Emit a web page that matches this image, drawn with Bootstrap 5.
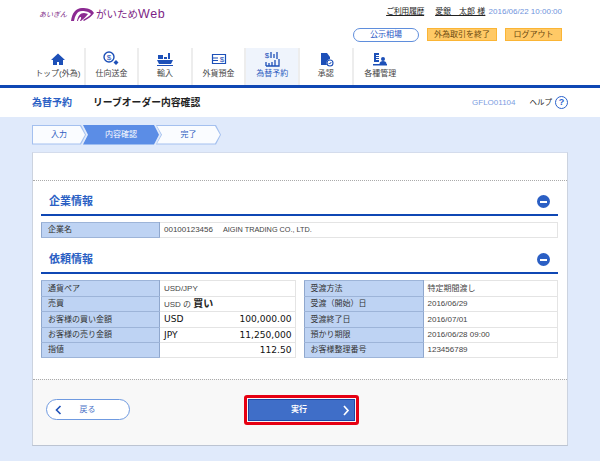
<!doctype html>
<html lang="ja"><head><meta charset="utf-8"><title>リーブオーダー内容確認</title>
<link rel="stylesheet" href="https://cdn.jsdelivr.net/npm/bootstrap@5.3.0/dist/css/bootstrap.min.css">
<style>
html,body{height:461px;overflow:hidden}
body{background:#e0eafb;font:8px/1.2 "Liberation Sans","Noto Sans CJK JP",sans-serif;color:#444}
.hdr{background:#fff;height:85px;padding:0 38px 0 39px}
.logo{height:28px;padding-top:7px;color:#7d1f86}
.logo-sm{font-size:7px;font-style:italic;margin-right:3px;margin-top:4px}
.logo-big{font-size:10.500px;margin-left:1px;line-height:17px;margin-top:-1px}
.logo-big em{font-style:normal;font-size:12.500px;letter-spacing:.6px}
.util{padding-top:7px;height:28px;font-size:8px;color:#333}
.util u{margin-right:11px;color:#222;letter-spacing:-.4px}
.util .who{margin-right:1px;text-decoration:underline;color:#222}
.date{color:#6f93dc}
.acts{height:14px}
.pub{width:66px;height:14px;border:1px solid #5f8edc;border-radius:7px;color:#1f55c4;margin-right:8px;line-height:12px}
.org{height:13px;background:#ffc966;border:1px solid #fbb535;color:#6b4a10;line-height:11px}
.org1{width:70px;margin-right:8px}.org2{width:57px}
.tabs{margin-top:6px;margin-left:-7px;height:37px}
.tabx{width:53.600px;height:37px;border-right:2px solid #ededed;color:#444;font-size:8px;padding-top:3px}
.tabx svg{display:block;height:16px;width:18px;margin-bottom:2px}
.tabx.on{background:#eff4fc;color:#2d5cc0}
.tabx.last{border:0}
.rule{height:3px;background:#0f47b4}
.ttl{height:29px;background:#fff;padding:0 32px}
.ttl-a{font-size:10px;font-weight:700;color:#2b5fc4;width:61px}
.ttl-b{font-size:9.800px;color:#222;font-weight:700}
.code{color:#7b9ddf;margin-right:14px}
.hlp{color:#222;font-size:7.500px;margin-right:3px}
.qm{width:13px;height:13px;border:1.500px solid #2a62cc;border-radius:50%;color:#2a62cc;font-size:9px;font-weight:700;line-height:10px}
.crumbs{padding:8px 0 0 32px;height:35px}
.stp{height:19.500px;position:relative;background:#a4c0ef;clip-path:polygon(0 0,calc(100% - 5px) 0,100% 50%,calc(100% - 5px) 100%,0 100%,5px 50%);color:#2d5cc0}
.stp::before{content:"";position:absolute;inset:1px;background:#fafcff;clip-path:polygon(0 0,calc(100% - 5px) 0,100% 50%,calc(100% - 5px) 100%,0 100%,5px 50%)}
.stp span{position:relative}
.stp.s1{width:54px;clip-path:polygon(0 0,calc(100% - 5px) 0,100% 50%,calc(100% - 5px) 100%,0 100%)}
.stp.s1::before{clip-path:polygon(0 0,calc(100% - 5px) 0,100% 50%,calc(100% - 5px) 100%,0 100%)}
.stp.s2{width:76px;margin-left:-3px;background:#5b8de6;color:#fff}
.stp.s2::before{background:#5b8de6}
.stp.s3{width:65px;margin-left:-3px}
.sheet{margin:0 32px;height:294px;background:#fff;border:1px solid #ccd3df;border-bottom:2px solid #bcc4d2;border-top:1px solid #d4dcec}
.blank{height:28px;border-bottom:1px dotted #aaa}
.inner{padding:0 9px 0 8px;height:198px}
.sec{height:35px;margin:0;padding:8px 8px 0 8px;border-bottom:2px solid #0f47b4;font-size:11px;font-weight:700;color:#2b5fc4}
.sec2{height:36px;padding-top:9px}
.tog{width:13px;height:13px;border-radius:50%;background:#2b5fc4;position:relative}
.tog::after{content:"";position:absolute;left:3px;right:3px;top:5.500px;height:2px;background:#fff}
.tb{border-collapse:collapse;width:100%;table-layout:fixed}
.tb th,.tb td{height:15.400px;padding:0 4px 0 4px;border:1px solid #e4e4e4;font-weight:400;white-space:nowrap;overflow:hidden}
.tb th{background:#bed3f3;color:#333;border-color:#9db4d8;border-left:1px solid #8fa7cd;border-right:1px solid #8fa7cd;padding-left:6px}
.tb td{color:#444;border-width:1.500px}
.tb td.big{font:500 9.100px "DejaVu Sans",sans-serif;color:#111;padding-right:3px}
.corp{font-size:7.300px;margin-left:10px}
.w1{width:118px}.w2{width:119px}
.gap1{margin-top:6px}
.gap2{margin-top:6px;gap:8px}
.amt{font-weight:700;font-size:10px;color:#222}
.foot{height:66px;background:#f8f8f8;border-top:1px dotted #aaa;padding:15px 13px 0 13px}
.btn.back{font-size:8px;line-height:1.2;width:84px;height:21px;border:1px solid #6f9ae0;border-radius:11px;background:#fff;color:#4c73c8;padding:0 0 0 8px;margin-top:4px}
.back svg{width:7px;height:10px}
.run-wrap{border:3px solid #e60012;border-radius:3px;width:115px;height:30px;margin-left:114px;padding:1px}
.btn.run{font-size:8px;line-height:1.2;width:100%;height:100%;background:#3f6ec8;border:1px solid #1c47a5;color:#fff;border-radius:0;padding:0 4px 0 0;font-weight:700}
.run span{padding-left:7px}
.run svg{width:8px;height:11px}
</style></head><body>
<header class="hdr">
  <div class="d-flex justify-content-between">
    <div class="logo d-flex align-items-start">
      <span class="logo-sm">あいぎん</span>
      <svg width="25" height="15" viewBox="0 0 25 15"><path d="M1 14C2 6 6 1 12 1c5 0 10 1 12 5-2 3-6 6-10 8l-1-1c3-2 7-4 8-6-3-3-7-3-9-3-5 0-7 5-8 10z" fill="#8c2a92"/><path d="M7 14c1-5 3-8 7-8 2 0 3 1 4 1-2 3-5 5-7 7h-1c1-2 2-4 0-4-1 1-2 3-2 4z" fill="#8c2a92"/></svg>
      <span class="logo-big">がいため<em>Web</em></span>
    </div>
    <div class="d-flex flex-column align-items-end">
      <div class="util"><u>ご利用履歴</u><span class="who">愛銀　太郎 様</span> <span class="date">2016/06/22 10:00:00</span></div>
      <div class="acts d-flex text-center">
        <div class="pub">公示相場</div><div class="org org1">外為取引を終了</div><div class="org org2">ログアウト</div>
      </div>
    </div>
  </div>
  <nav class="tabs d-flex">
    <div class="tabx d-flex flex-column align-items-center"><svg viewBox="0 0 18 16"><path d="M9 2.500 2 9h2v5h4v-3h2v3h4V9h2z" fill="#1d50b8"/></svg>トップ(外為)</div>
    <div class="tabx d-flex flex-column align-items-center"><svg viewBox="0 0 18 16"><circle cx="7" cy="6" r="5" fill="none" stroke="#1d50b8" stroke-width="1.400"/><text x="7" y="9" font-size="8" text-anchor="middle" fill="#1d50b8">$</text><path d="m14 9 2.500 2.500-2.500 2.500-2.500-2.500z" fill="#1d50b8"/></svg>仕向送金</div>
    <div class="tabx d-flex flex-column align-items-center"><svg viewBox="0 0 18 16"><path d="M1 9h16l-2 4H3zM2 4h5v4H2zM8 6h3v2H8zM12 2h2v6h-2zM1 14h16v1H1z" fill="#1d50b8"/></svg>輸入</div>
    <div class="tabx d-flex flex-column align-items-center"><svg viewBox="0 0 18 16"><path d="M2.500 3.500h13v9h-13zM3 7h5M3 9.500h5" fill="none" stroke="#1d50b8" stroke-width="1.200"/><text x="12" y="11" font-size="8" text-anchor="middle" fill="#1d50b8">$</text></svg>外貨預金</div>
    <div class="tabx on d-flex flex-column align-items-center"><svg viewBox="0 0 18 16"><text x="4" y="7" font-size="8" text-anchor="middle" fill="#1d50b8">$</text><path d="M8 1v6M11 3v4M14 1v7M3 15h13V8M3 15V11M6 15v-3M9 15v-4M12 15V9" fill="none" stroke="#1d50b8" stroke-width="1.300"/></svg>為替予約</div>
    <div class="tabx d-flex flex-column align-items-center"><svg viewBox="0 0 18 16"><path d="M4 2h6l3 4v2a4 4 0 0 0-3 6H4z" fill="#1d50b8"/><circle cx="13" cy="12" r="3" fill="none" stroke="#1d50b8" stroke-width="1.100"/><path d="m11.700 12 1 1 1.600-2" fill="none" stroke="#1d50b8"/></svg>承認</div>
    <div class="tabx last d-flex flex-column align-items-center"><svg viewBox="0 0 18 16"><path d="M3 2h5v2h-3v1h3v1H5v1h3v1H5v1h3v2H3zM2 13h14v1.500H2z" fill="#1d50b8"/><circle cx="12" cy="8" r="2" fill="#1d50b8"/><path d="M8.500 13c0-2 1.500-3 3.500-3s3.500 1 3.500 3z" fill="#1d50b8"/></svg>各種管理</div>
  </nav>
</header>
<div class="rule"></div>
<div class="ttl d-flex align-items-center">
  <div class="ttl-a">為替予約</div><div class="ttl-b flex-grow-1">リーブオーダー内容確認</div>
  <div class="code">GFLO01104</div><div class="hlp">ヘルプ</div><div class="qm text-center">?</div>
</div>
<div class="crumbs d-flex align-items-start">
  <div class="stp s1 d-flex align-items-center justify-content-center"><span>入力</span></div>
  <div class="stp s2 d-flex align-items-center justify-content-center"><span>内容確認</span></div>
  <div class="stp s3 d-flex align-items-center justify-content-center"><span>完了</span></div>
</div>
<main class="sheet">
  <div class="blank"></div>
  <div class="inner">
    <div class="sec d-flex justify-content-between align-items-center"><span>企業情報</span><span class="tog"></span></div>
    <table class="tb gap1"><tr><th class="w1">企業名</th><td>00100123456<span class="corp">AIGIN TRADING CO., LTD.</span></td></tr></table>
    <div class="sec sec2 d-flex justify-content-between align-items-center"><span>依頼情報</span><span class="tog"></span></div>
    <div class="d-flex gap2">
      <table class="tb"><tr><th class="w1">通貨ペア</th><td>USD/JPY</td></tr>
        <tr><th>売買</th><td>USD の <span class="amt">買い</span></td></tr>
        <tr><th>お客様の買い金額</th><td class="big"><div class="d-flex justify-content-between"><span>USD</span><span>100,000.00</span></div></td></tr>
        <tr><th>お客様の売り金額</th><td class="big"><div class="d-flex justify-content-between"><span>JPY</span><span>11,250,000</span></div></td></tr>
        <tr><th>指値</th><td class="big text-end">112.50</td></tr></table>
      <table class="tb"><tr><th class="w2">受渡方法</th><td>特定期間渡し</td></tr>
        <tr><th>受渡（開始）日</th><td>2016/06/29</td></tr>
        <tr><th>受渡終了日</th><td>2016/07/01</td></tr>
        <tr><th>預かり期限</th><td>2016/06/28 09:00</td></tr>
        <tr><th>お客様整理番号</th><td>123456789</td></tr></table>
    </div>
  </div>
  <div class="foot d-flex align-items-start">
    <button class="btn back d-flex align-items-center"><svg viewBox="0 0 7 10"><path d="M5.500 1 1.500 5l4 4" fill="none" stroke="#1d50b8" stroke-width="1.600"/></svg><span class="flex-grow-1 text-center pe-3">戻る</span></button>
    <div class="run-wrap"><button class="btn run d-flex align-items-center justify-content-end"><span class="flex-grow-1 text-center">実行</span><svg viewBox="0 0 8 11"><path d="m2 1 4 4.500-4 4.500" fill="none" stroke="#fff" stroke-width="1.700"/></svg></button></div>
  </div>
</main>
<script src="https://cdn.jsdelivr.net/npm/bootstrap@5.3.0/dist/js/bootstrap.bundle.min.js"></script>
</body></html>
